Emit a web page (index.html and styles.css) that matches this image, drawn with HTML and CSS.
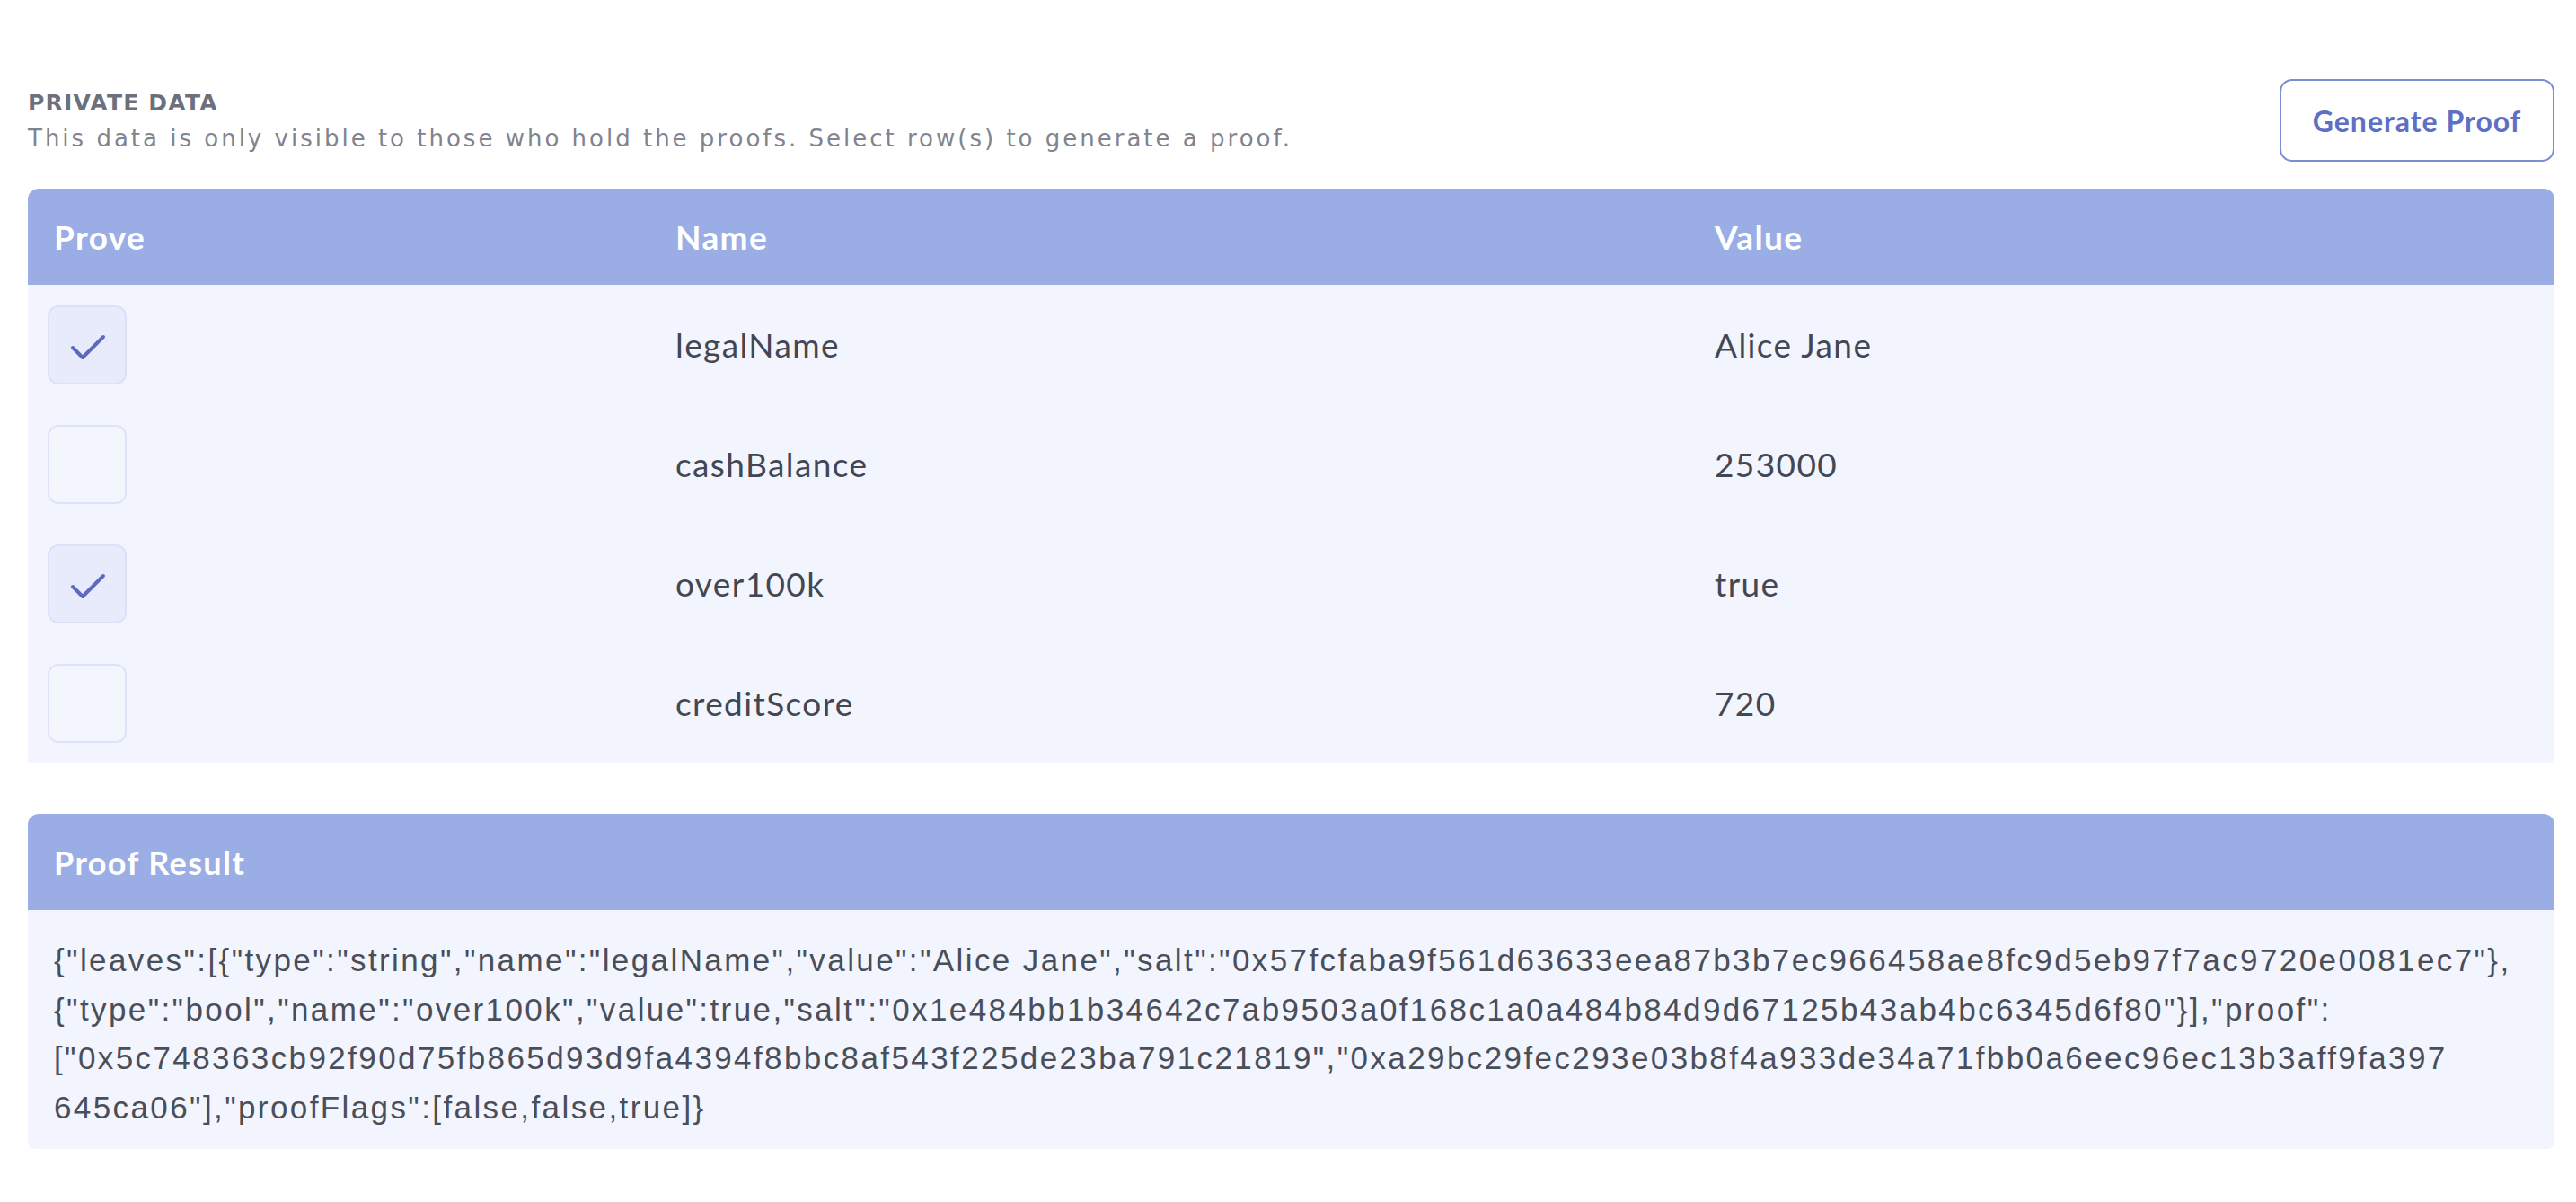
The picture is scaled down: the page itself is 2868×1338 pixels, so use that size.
FILE: index.html
```html
<!DOCTYPE html>
<html lang="en">
<head>
<meta charset="utf-8">
<title>Private Data</title>
<link rel="stylesheet" href="styles.css">
</head>
<body>
<main class="page">
  <header class="section-head">
    <div class="head-text">
      <h2 class="eyebrow">PRIVATE DATA</h2>
      <p class="sub">This data is only visible to those who hold the proofs. Select row(s) to generate a proof.</p>
    </div>
    <button class="btn-outline" type="button">Generate Proof</button>
  </header>

  <div class="data-table">
    <div class="t-head cols"><span>Prove</span><span>Name</span><span>Value</span></div>
    <div class="t-row cols">
      <span class="cb checked"><svg viewBox="2 2 84 84" width="84" height="84"><polyline points="28,47 39,58 62,35" /></svg></span>
      <span>legalName</span><span>Alice Jane</span>
    </div>
    <div class="t-row cols">
      <span class="cb"></span>
      <span>cashBalance</span><span>253000</span>
    </div>
    <div class="t-row cols">
      <span class="cb checked"><svg viewBox="2 2 84 84" width="84" height="84"><polyline points="28,47 39,58 62,35" /></svg></span>
      <span>over100k</span><span>true</span>
    </div>
    <div class="t-row cols">
      <span class="cb"></span>
      <span>creditScore</span><span>720</span>
    </div>
  </div>

  <section class="result-card">
    <div class="card-head">Proof Result</div>
    <div class="card-body">
      <p class="json">{"leaves":[{"type":"string","name":"legalName","value":"Alice Jane","salt":"0x57fcfaba9f561d63633eea87b3b7ec966458ae8fc9d5eb97f7ac9720e0081ec7"},<br>{"type":"bool","name":"over100k","value":true,"salt":"0x1e484bb1b34642c7ab9503a0f168c1a0a484b84d9d67125b43ab4bc6345d6f80"}],"proof":<br>["0x5c748363cb92f90d75fb865d93d9fa4394f8bbc8af543f225de23ba791c21819","0xa29bc29fec293e03b8f4a933de34a71fbb0a6eec96ec13b3aff9fa397<br>645ca06"],"proofFlags":[false,false,true]}</p>
    </div>
  </section>
</main>
</body>
</html>
```

FILE: styles.css
```css
* { box-sizing: border-box; }

body {
  margin: 0;
  background: #ffffff;
  font-family: "Lato", "Open Sans", sans-serif;
}

.page {
  padding: 88px 24px 40px 31px;
}

.section-head {
  display: flex;
  justify-content: space-between;
  align-items: flex-start;
}

.head-text {
  padding-top: 9px;
  font-family: "DejaVu Sans", sans-serif;
}

.eyebrow {
  margin: 0;
  font-size: 25px;
  line-height: 36px;
  font-weight: 700;
  color: #6c707c;
  letter-spacing: 1.2px;
}

.sub {
  margin: 0;
  font-size: 26px;
  line-height: 42px;
  color: #80848e;
  letter-spacing: 3px;
}

.btn-outline {
  width: 306px;
  height: 92px;
  border: 2px solid #7d8dd3;
  border-radius: 14px;
  background: #ffffff;
  color: #5f6fc4;
  font-family: "Lato", sans-serif;
  font-weight: 700;
  font-size: 32px;
  letter-spacing: 1px;
  padding: 0;
}

.data-table {
  margin-top: 30px;
  border-radius: 12px 12px 0 0;
  overflow: hidden;
}

.cols {
  display: grid;
  grid-template-columns: 692px 1157px 1fr;
  align-items: center;
  padding-left: 29px;
}

.t-head {
  height: 107px;
  background: #9badE5;
  color: #ffffff;
  font-weight: 700;
  font-size: 37px;
  letter-spacing: 1.4px;
}

.t-row {
  height: 133px;
  background: #f2f5fd;
  color: #434753;
  font-size: 37px;
  letter-spacing: 1.4px;
}

.cb {
  display: block;
  width: 88px;
  height: 88px;
  margin-left: -7px;
  border: 2px solid #dfe3fa;
  border-radius: 12px;
  background: #f4f6fe;
}

.cb.checked {
  background: #e7ebfb;
  border-color: #dce1fa;
}

.cb svg {
  display: block;
  fill: none;
  stroke: #5c6bc0;
  stroke-width: 4;
  stroke-linecap: round;
  stroke-linejoin: round;
}

.result-card {
  margin-top: 57px;
  border-radius: 12px 12px 8px 8px;
  overflow: hidden;
}

.card-head {
  height: 107px;
  display: flex;
  align-items: center;
  padding-left: 29px;
  background: #9badE5;
  color: #ffffff;
  font-weight: 700;
  font-size: 36px;
  letter-spacing: 1.4px;
}

.card-body {
  background: #f2f5fd;
  padding: 29px 29px 19px;
}

.json {
  margin: 0;
  white-space: nowrap;
  font-family: "Liberation Sans", "Lato", sans-serif;
  font-size: 35px;
  letter-spacing: 2.4px;
  line-height: 54.5px;
  color: #4a4e59;
}
```
